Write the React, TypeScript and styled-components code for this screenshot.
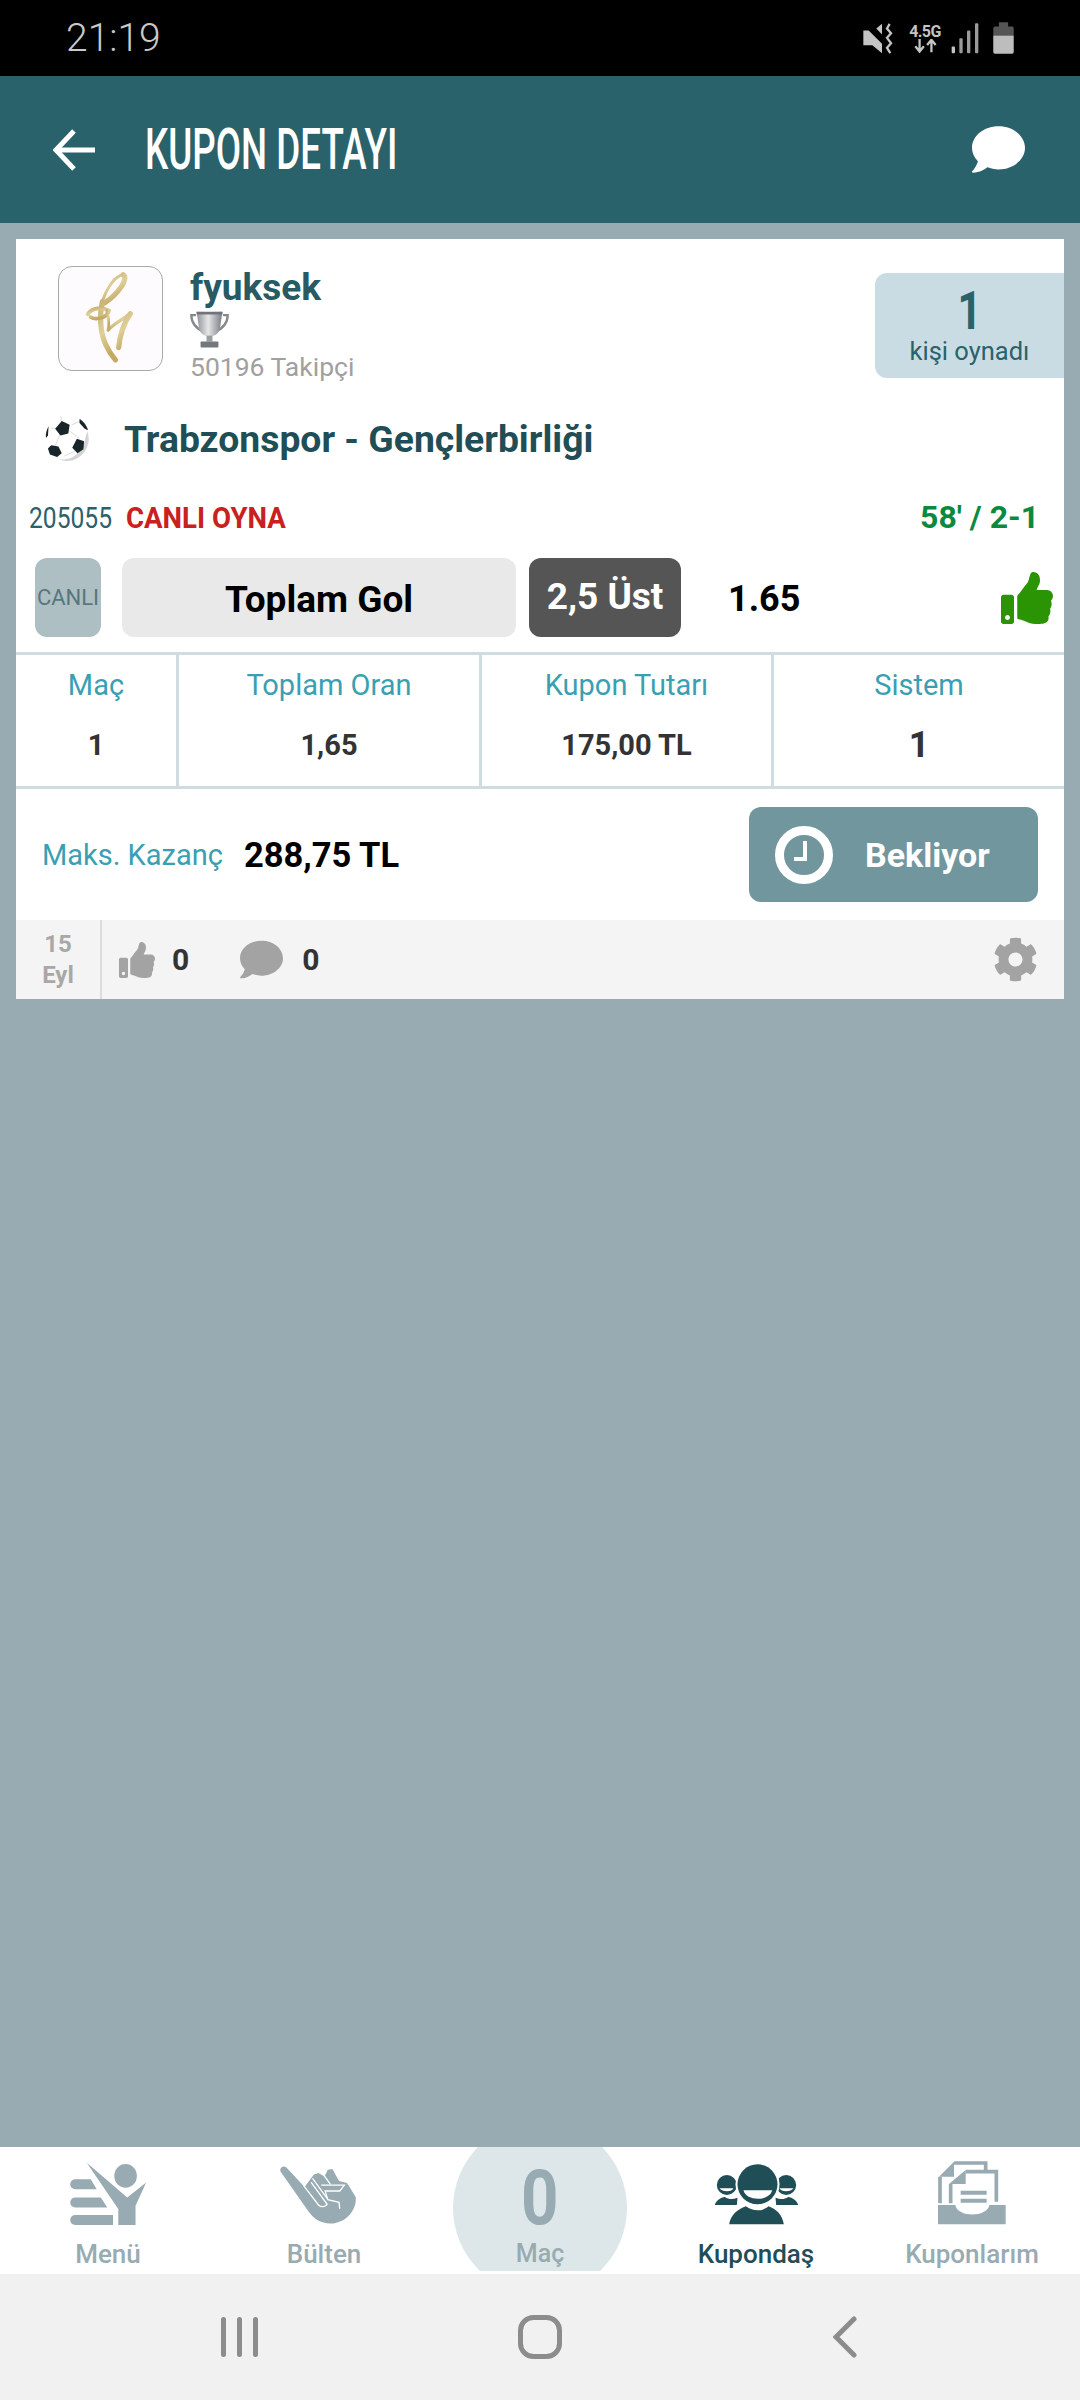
import React from "react";
import styled, { createGlobalStyle } from "styled-components";
import { FaThumbsUp, FaComment, FaCog } from "react-icons/fa";

const GlobalStyle = createGlobalStyle`
  html, body {
    margin: 0;
    padding: 0;
    background: #98abb2;
    font-family: Roboto, "Noto Sans", sans-serif;
  }
  * { box-sizing: border-box; }
`;

const Page = styled.div`
  width: 1080px;
  height: 2400px;
  display: flex;
  flex-direction: column;
  background: #98abb2;
  overflow: hidden;
`;

/* status bar */
const StatusBar = styled.div`
  height: 76px;
  background: #000;
  display: flex;
  align-items: center;
  justify-content: space-between;
  padding: 0 66px 0 66px;
`;
const Clock = styled.span`
  color: #c9c9c9;
  font-size: 39px;
  font-weight: 300;
  line-height: 78px;
`;
const StatusIcons = styled.div`
  display: flex;
  align-items: center;
`;
const NetworkCol = styled.div`
  width: 34px;
  margin: 0 9px 0 13px;
  display: flex;
  flex-direction: column;
  align-items: center;
  color: #c4c4c4;
  font-size: 16px;
  font-weight: 700;
  line-height: 15px;
  letter-spacing: -0.6px;
`;

/* header */
const Header = styled.header`
  height: 147px;
  background: #2a626b;
  display: flex;
  align-items: center;
  padding: 0 55px 0 53px;
  flex-shrink: 0;
`;
const Title = styled.h1`
  margin: 0 0 0 50px;
  color: #fff;
  font-size: 57px;
  line-height: 60px;
  font-weight: 500;
  white-space: nowrap;
  transform: scaleX(0.645);
  transform-origin: left center;
  flex: 1;
`;

/* content */
const Content = styled.main`
  flex: 1;
  padding: 16px 16px 0;
`;
const Card = styled.section`
  width: 1048px;
  height: 760px;
  background: #fff;
  display: flex;
  flex-direction: column;
`;
const Profile = styled.div`
  height: 156px;
  display: flex;
  align-items: flex-start;
  padding: 27px 0 0 42px;
`;
const Avatar = styled.div`
  width: 105px;
  height: 105px;
  border: 1.5px solid #a9a9a9;
  border-radius: 14px;
  background: #fdfbfd;
  display: flex;
  flex-shrink: 0;
`;
const UserInfo = styled.div`
  margin: 0 0 0 27px;
  display: flex;
  flex-direction: column;
  flex: 1;
`;
const UserName = styled.div`
  color: #285a63;
  font-size: 37px;
  font-weight: 700;
  line-height: 44px;
  margin-bottom: 1px;
`;
const Followers = styled.div`
  color: #a0a0a0;
  font-size: 26.5px;
  line-height: 30px;
  margin-top: 4px;
`;
const PlayedBadge = styled.div`
  width: 189px;
  height: 105px;
  margin-top: 7px;
  background: #cadce3;
  border-radius: 12px 0 0 12px;
  display: flex;
  flex-direction: column;
  align-items: center;
  color: #2a626b;
`;
const PlayedCount = styled.div`
  font-size: 54px;
  font-weight: 700;
  line-height: 50px;
  margin-top: 13px;
  transform: scaleX(0.78);
`;
const PlayedLabel = styled.div`
  font-size: 25.5px;
  line-height: 30px;
`;
const MatchRow = styled.div`
  height: 88px;
  display: flex;
  align-items: center;
  padding-left: 28px;
`;
const MatchName = styled.div`
  margin-left: 34px;
  color: #1f4e56;
  font-size: 37.3px;
  font-weight: 700;
`;
const InfoRow = styled.div`
  height: 68px;
  display: flex;
  align-items: center;
  padding: 0 25px 0 13px;
  font-size: 30px;
  white-space: nowrap;
`;
const MatchCode = styled.span`
  color: #2a626b;
  width: 97px;
  transform: scaleX(0.82);
  transform-origin: left center;
`;
const LiveLink = styled.span`
  color: #c92020;
  font-weight: 700;
  flex: 1;
  transform: scaleX(0.92);
  transform-origin: left center;
`;
const Score = styled.span`
  color: #0b8a3e;
  font-size: 32px;
  font-weight: 700;
`;
const BetRow = styled.div`
  height: 79px;
  margin-top: 7px;
  display: flex;
  align-items: stretch;
  padding: 0 11px 0 19px;
`;
const LivePill = styled.div`
  width: 66px;
  border-radius: 12px;
  background: #adbfc2;
  color: #56777e;
  font-size: 22px;
  display: flex;
  align-items: center;
  justify-content: center;
`;
const MarketPill = styled.div`
  width: 394px;
  margin-left: 21px;
  border-radius: 12px;
  background: #e9e9e9;
  color: #000;
  font-size: 37px;
  font-weight: 700;
  display: flex;
  align-items: center;
  justify-content: center;
  padding-top: 3px;
`;
const PickPill = styled.div`
  width: 152px;
  margin-left: 13px;
  border-radius: 12px;
  background: #555;
  color: #fff;
  font-size: 37px;
  font-weight: 700;
  display: flex;
  align-items: center;
  justify-content: center;
  padding-bottom: 2px;
`;
const Odds = styled.div`
  margin-left: 47px;
  color: #000;
  font-size: 36px;
  font-weight: 700;
  display: flex;
  align-items: center;
  padding-top: 3px;
  flex: 1;
`;
const ResultIcon = styled.div`
  color: #2a9404;
  font-size: 52px;
  display: flex;
  align-items: center;
`;
const StatsTable = styled.div`
  margin-top: 15px;
  height: 137px;
  border-top: 3px solid #cfdde3;
  border-bottom: 3px solid #cfdde3;
  display: grid;
  grid-template-columns: 163px 303px 292px 290px;
`;
const StatCell = styled.div<{ $last?: boolean }>`
  border-right: ${({ $last }) => ($last ? "none" : "3px solid #cfdde3")};
  display: flex;
  flex-direction: column;
  align-items: center;
  padding-top: 12px;
`;
const StatLabel = styled.div`
  color: #3a9fb2;
  font-size: 29px;
  line-height: 36px;
`;
const StatValue = styled.div<{ $big?: boolean }>`
  margin-top: 24px;
  color: #333;
  font-size: ${({ $big }) => ($big ? "36px" : "29px")};
  font-weight: 700;
  line-height: 36px;
`;
const WinRow = styled.div`
  height: 131px;
  display: flex;
  align-items: center;
  padding: 0 26px 0 26px;
`;
const WinLabel = styled.span`
  color: #3a9fb2;
  font-size: 29px;
`;
const WinValue = styled.span`
  margin-left: 21px;
  color: #000;
  font-size: 34.5px;
  font-weight: 700;
  flex: 1;
`;
const StatusButton = styled.button`
  width: 289px;
  height: 95px;
  border: none;
  border-radius: 12px;
  background: #71969e;
  color: #fff;
  font-family: inherit;
  font-size: 34px;
  font-weight: 700;
  display: flex;
  align-items: center;
  gap: 32px;
  padding: 0 0 0 26px;
`;
const CardFooter = styled.div`
  height: 79px;
  background: #f4f4f4;
  display: flex;
  align-items: center;
  padding-right: 26px;
`;
const DateCol = styled.div`
  width: 86px;
  height: 79px;
  border-right: 2px solid #dcdcdc;
  display: flex;
  flex-direction: column;
  align-items: center;
  justify-content: center;
  color: #a8a8a8;
  font-size: 24px;
  font-weight: 700;
  line-height: 31px;
`;
const FooterIcon = styled.span<{ $ml: number; $size: number }>`
  margin-left: ${({ $ml }) => $ml}px;
  color: #a3a3a3;
  font-size: ${({ $size }) => $size}px;
  display: flex;
`;
const FooterCount = styled.span<{ $ml: number }>`
  margin-left: ${({ $ml }) => $ml}px;
  color: #333;
  font-size: 30px;
  font-weight: 700;
`;
const GearWrap = styled.span`
  margin-left: auto;
  color: #a3a3a3;
  font-size: 45px;
  display: flex;
`;

/* bottom tabs */
const TabBar = styled.nav`
  height: 127px;
  background: #fff;
  display: grid;
  grid-template-columns: repeat(5, 216px);
  flex-shrink: 0;
`;
const Tab = styled.div<{ $active?: boolean }>`
  display: flex;
  flex-direction: column;
  align-items: center;
  color: ${({ $active }) => ($active ? "#1f4e56" : "#98abb2")};
  font-size: 26px;
  font-weight: 500;
`;
const TabIcon = styled.div`
  height: 78px;
  display: flex;
  align-items: flex-end;
`;
const TabLabel = styled.div`
  line-height: 30px;
  margin-top: 14px;
`;
const CountTab = styled.div`
  position: relative;
  height: 124px;
  overflow: hidden;
  display: flex;
  flex-direction: column;
  align-items: center;
  color: #98abb2;

  &::before {
    content: "";
    position: absolute;
    left: 21px;
    top: -26px;
    width: 174px;
    height: 174px;
    border-radius: 50%;
    background: #dde7e9;
  }
`;
const CountValue = styled.div`
  position: relative;
  margin-top: 13px;
  font-size: 76px;
  font-weight: 700;
  line-height: 76px;
  transform: scaleX(0.86);
`;
const CountLabel = styled.div`
  position: relative;
  margin-top: 3px;
  font-size: 25px;
  font-weight: 500;
  line-height: 30px;
`;

/* android nav */
const NavBar = styled.div`
  height: 126px;
  background: #f1f1f1;
  display: grid;
  grid-template-columns: 480px 120px 1fr;
  align-items: center;
  flex-shrink: 0;
`;
const NavSlot = styled.div<{ $pl?: number }>`
  display: flex;
  padding-left: ${({ $pl }) => $pl ?? 0}px;
  justify-content: ${({ $pl }) => ($pl === undefined ? "center" : "flex-start")};
`;

const BatterySvg = styled.svg`
  margin-left: 14px;
`;
const BulletinSvg = styled.svg`
  margin-right: 14px;
`;

const BackArrow = () => (
  <svg width="42" height="42" viewBox="0 0 42 42" fill="none" stroke="#fff" strokeWidth="5">
    <path d="M2 21H42" />
    <path d="M21 2L3 21l18 19" />
  </svg>
);

const MuteIcon = () => (
  <svg width="32" height="31" viewBox="44 40 96 92" fill="#c4c4c4">
    <path d="M45 62h16l40 40v28L72 106H45z" />
    <path d="M84 56l17-14v32z" />
    <path d="M124 42l-8 14 12 14-12 14 12 16-12 14 10 16" fill="none" stroke="#c4c4c4" strokeWidth="7" />
  </svg>
);

const TransferArrows = () => (
  <svg width="23" height="14" viewBox="192 96 70 42" fill="none" stroke="#c4c4c4" strokeWidth="7">
    <path d="M209 96v38M196 118l13 16 13-16" />
    <path d="M245 136V98M232 114l13-16 13 16" />
  </svg>
);

const SignalIcon = () => (
  <svg width="28" height="31" viewBox="305 40 84 92" fill="#c4c4c4">
    <rect x="307" y="110" width="10" height="20" rx="3" />
    <rect x="330" y="85" width="10" height="45" rx="3" fill="#9a9a9a" />
    <rect x="353" y="62" width="10" height="68" rx="3" fill="#9a9a9a" />
    <rect x="377" y="40" width="10" height="90" rx="3" fill="#9a9a9a" />
  </svg>
);

const BatteryIcon = () => (
  <BatterySvg width="21" height="32" viewBox="430 34 62 97">
    <path d="M447 35h28v13h12a5 5 0 0 1 5 5v22h-62V53a5 5 0 0 1 5-5h12z" fill="#555" />
    <path d="M430 75h62v50a5 5 0 0 1-5 5h-52a5 5 0 0 1-5-5z" fill="#bdbdbd" />
  </BatterySvg>
);

const FyLogo = () => (
  <svg width="102" height="102" viewBox="25 18 313 314" fill="none" strokeLinecap="round">
    <defs>
      <linearGradient id="gold" x1="0" y1="0" x2="0.4" y2="1">
        <stop offset="0" stopColor="#c9b173" />
        <stop offset="0.5" stopColor="#dfd09a" />
        <stop offset="1" stopColor="#c4a965" />
      </linearGradient>
    </defs>
    <g stroke="url(#gold)">
      <path d="M222 42C196 46 170 84 158 125" strokeWidth="9" />
      <path d="M222 42C240 52 208 100 165 128" strokeWidth="16" />
      <path d="M158 125C148 170 152 222 168 256C176 274 186 290 198 304" strokeWidth="16" />
      <path d="M113 163C128 142 156 142 178 152C172 176 136 182 122 172" strokeWidth="12" />
      <path d="M176 212C192 192 220 180 246 160" strokeWidth="10" />
      <path d="M244 162C226 188 212 226 208 266" strokeWidth="16" />
      <path d="M172 152C176 172 180 196 176 212" strokeWidth="9" />
    </g>
  </svg>
);

const Trophy = () => (
  <svg width="39" height="37" viewBox="418 158 118 111">
    <defs>
      <linearGradient id="silver" x1="0" y1="0" x2="1" y2="0">
        <stop offset="0" stopColor="#8e9296" />
        <stop offset="0.45" stopColor="#e4e6e8" />
        <stop offset="1" stopColor="#777b80" />
      </linearGradient>
    </defs>
    <path d="M436 170h-14c0 28 16 42 40 52M518 170h14c0 28-16 42-40 52" fill="none" stroke="#85898e" strokeWidth="7" />
    <path d="M438 160h78l-7 48c-3 18-16 26-32 26s-29-8-32-26z" fill="url(#silver)" />
    <rect x="438" y="160" width="78" height="8" fill="#707478" />
    <rect x="468" y="232" width="18" height="18" fill="#9a9da1" />
    <rect x="450" y="250" width="54" height="18" rx="2" fill="#74787c" />
  </svg>
);

const Ball = () => (
  <svg width="46" height="46" viewBox="38 33 140 140">
    <circle cx="108" cy="103" r="67" fill="#fff" />
    <path d="M170 80a67 67 0 0 1-62 90c-8 0-16-2-24-5 34 2 60-10 76-50 3-10 6-24 10-35z" fill="#d4d4d4" />
    <g stroke="#c8c8c8" strokeWidth="2" fill="none">
      <path d="M95 70L60 70M115 78L145 100M85 92L72 125M100 155L132 140M90 50V33M122 60L145 50" />
    </g>
    <g fill="#18262b">
      <path d="M92 48l24 12-4 26-24 6-16-20z" />
      <path d="M138 102l22 8-2 24-18 12-16-16z" />
      <path d="M60 122l22 4 10 20-14 12-22-8-6-18z" />
      <path d="M146 42c12 6 22 20 26 34l-10-4-16-18z" />
      <path d="M52 64l-2 28-6 8c-2-12 2-26 8-36z" />
    </g>
  </svg>
);

const ClockIcon = () => (
  <svg width="58" height="58" viewBox="0 0 58 58" fill="none" stroke="#fff">
    <circle cx="29" cy="29" r="24.5" strokeWidth="9" />
    <path d="M30 15v18H19" strokeWidth="4" />
  </svg>
);

const MenuIcon = () => (
  <svg width="77" height="63" viewBox="33 18 231 190" fill="#98abb2">
    <path d="M48 70h47l18 30H48a15 15 0 0 1 0-30z" />
    <path d="M48 125h77l20 30H48a15 15 0 0 1 0-30z" />
    <path d="M48 178h114v30H48a15 15 0 0 1 0-30z" />
    <path d="M83 20L205 125l57-45-32 70v58h-52v-48z" />
    <ellipse cx="200" cy="60" rx="34" ry="36" />
  </svg>
);

const BulletinIcon = () => (
  <BulletinSvg width="77" height="60" viewBox="655 33 232 178">
    <path
      d="M660 52c-6-10 8-22 18-12l54 58 28-38 14-4 18 10 10-20 14-2 20 36 24 6 26 42c4 34-24 78-76 80-30 0-50-14-66-36z"
      fill="#98abb2"
    />
    <g fill="none" stroke="#fff" strokeWidth="4">
      <path d="M728 92l46 60c8 8 20 6 26-2l-48-66" />
      <path d="M756 72l44 60M790 62l20 28" />
      <path d="M782 92h70l-14 18h-44l8 26 34 8 2 20" />
    </g>
  </BulletinSvg>
);

const CrowdIcon = () => (
  <svg width="85" height="61" viewBox="40 25 254 183" fill="#1f4e56">
    <circle cx="78" cy="88" r="30" />
    <circle cx="256" cy="88" r="30" />
    <path d="M42 148c4-14 18-22 30-24 12 8 24 8 38 2l-2 22z" />
    <path d="M292 148c-4-14-18-22-30-24-12 8-24 8-38 2l2 22z" />
    <path d="M56 98h42c-4 12-34 12-42 0zM236 98h42c-8 12-38 12-42 0z" fill="#fff" />
    <circle cx="170" cy="86" r="66" fill="#fff" />
    <circle cx="170" cy="86" r="60" />
    <path d="M128 104h86c-8 34-78 34-86 0z" fill="#fff" />
    <path d="M85 206c4-28 26-46 50-54 22 16 50 16 68 0 24 8 42 26 46 54z" />
  </svg>
);

const CouponsIcon = () => (
  <svg width="68" height="64" viewBox="712 18 204 192" fill="#98abb2">
    <path d="M760 20l-45 45h45z" />
    <path d="M795 45l-50 42h50z" />
    <path d="M718 145V65M760 24h95v20M750 145V87M795 50h92v90" fill="none" stroke="#98abb2" strokeWidth="11" />
    <path d="M780 107h78v12h-78zM780 131h78v12h-78z" />
    <path d="M712 150h52c6 38 96 38 102 0h49v58H712z" />
  </svg>
);

const stats = [
  { label: "Maç", value: "1" },
  { label: "Toplam Oran", value: "1,65" },
  { label: "Kupon Tutarı", value: "175,00 TL" },
  { label: "Sistem", value: "1", big: true },
];

const App = () => {
  return (
    <Page>
      <GlobalStyle />
      <StatusBar>
        <Clock>21:19</Clock>
        <StatusIcons>
          <MuteIcon />
          <NetworkCol>
            4.5G
            <TransferArrows />
          </NetworkCol>
          <SignalIcon />
          <BatteryIcon />
        </StatusIcons>
      </StatusBar>

      <Header>
        <BackArrow />
        <Title>KUPON DETAYI</Title>
        <FaComment size={53} color="#fff" />
      </Header>

      <Content>
        <Card>
          <Profile>
            <Avatar>
              <FyLogo />
            </Avatar>
            <UserInfo>
              <UserName>fyuksek</UserName>
              <Trophy />
              <Followers>50196 Takipçi</Followers>
            </UserInfo>
            <PlayedBadge>
              <PlayedCount>1</PlayedCount>
              <PlayedLabel>kişi oynadı</PlayedLabel>
            </PlayedBadge>
          </Profile>

          <MatchRow>
            <Ball />
            <MatchName>Trabzonspor - Gençlerbirliği</MatchName>
          </MatchRow>

          <InfoRow>
            <MatchCode>205055</MatchCode>
            <LiveLink>CANLI OYNA</LiveLink>
            <Score>58' / 2-1</Score>
          </InfoRow>

          <BetRow>
            <LivePill>CANLI</LivePill>
            <MarketPill>Toplam Gol</MarketPill>
            <PickPill>2,5 Üst</PickPill>
            <Odds>1.65</Odds>
            <ResultIcon>
              <FaThumbsUp />
            </ResultIcon>
          </BetRow>

          <StatsTable>
            {stats.map((s, i) => (
              <StatCell key={s.label} $last={i === stats.length - 1}>
                <StatLabel>{s.label}</StatLabel>
                <StatValue $big={s.big}>{s.value}</StatValue>
              </StatCell>
            ))}
          </StatsTable>

          <WinRow>
            <WinLabel>Maks. Kazanç</WinLabel>
            <WinValue>288,75 TL</WinValue>
            <StatusButton>
              <ClockIcon />
              Bekliyor
            </StatusButton>
          </WinRow>

          <CardFooter>
            <DateCol>
              <span>15</span>
              <span>Eyl</span>
            </DateCol>
            <FooterIcon $ml={17} $size={36}>
              <FaThumbsUp />
            </FooterIcon>
            <FooterCount $ml={17}>0</FooterCount>
            <FooterIcon $ml={51} $size={43}>
              <FaComment />
            </FooterIcon>
            <FooterCount $ml={19}>0</FooterCount>
            <GearWrap>
              <FaCog />
            </GearWrap>
          </CardFooter>
        </Card>
      </Content>

      <TabBar>
        <Tab>
          <TabIcon>
            <MenuIcon />
          </TabIcon>
          <TabLabel>Menü</TabLabel>
        </Tab>
        <Tab>
          <TabIcon>
            <BulletinIcon />
          </TabIcon>
          <TabLabel>Bülten</TabLabel>
        </Tab>
        <CountTab>
          <CountValue>0</CountValue>
          <CountLabel>Maç</CountLabel>
        </CountTab>
        <Tab $active>
          <TabIcon>
            <CrowdIcon />
          </TabIcon>
          <TabLabel>Kupondaş</TabLabel>
        </Tab>
        <Tab>
          <TabIcon>
            <CouponsIcon />
          </TabIcon>
          <TabLabel>Kuponlarım</TabLabel>
        </Tab>
      </TabBar>

      <NavBar>
        <NavSlot $pl={221}>
          <svg width="38" height="42" viewBox="0 0 38 42" fill="#8c8c8c">
            <rect x="0" y="1" width="5" height="40" rx="2.5" />
            <rect x="16" y="1" width="5" height="40" rx="2.5" />
            <rect x="32" y="1" width="5" height="40" rx="2.5" />
          </svg>
        </NavSlot>
        <NavSlot>
          <svg width="44" height="44" viewBox="0 0 44 44" fill="none" stroke="#8c8c8c" strokeWidth="5">
            <rect x="2.5" y="2.5" width="39" height="39" rx="13" />
          </svg>
        </NavSlot>
        <NavSlot $pl={233}>
          <svg width="24" height="42" viewBox="0 0 24 42" fill="none" stroke="#8c8c8c" strokeWidth="5" strokeLinecap="round">
            <path d="M21 3L3 21l18 18" />
          </svg>
        </NavSlot>
      </NavBar>
    </Page>
  );
};

export default App;
